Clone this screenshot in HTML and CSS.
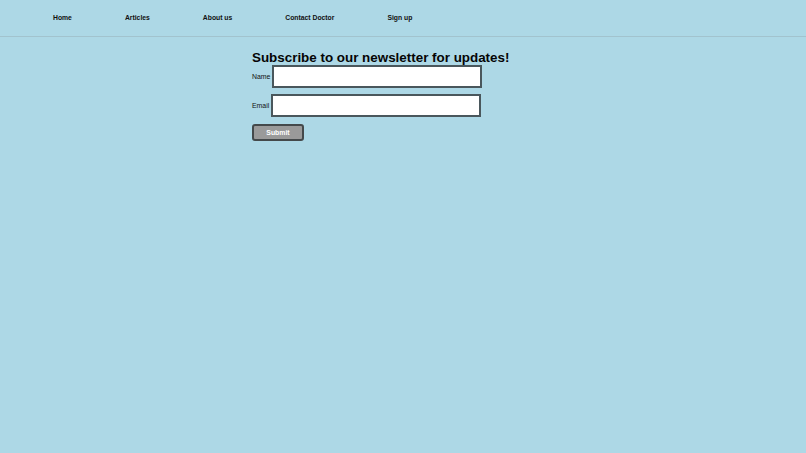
FILE: index.html
```html
<!DOCTYPE html>
<html lang="en">
<head>
<meta charset="utf-8">
<title>Newsletter</title>
<link rel="stylesheet" href="styles.css">
</head>
<body>
<nav class="nav">
  <a class="nav-link" href="#">Home</a>
  <a class="nav-link" href="#">Articles</a>
  <a class="nav-link" href="#">About us</a>
  <a class="nav-link" href="#">Contact Doctor</a>
  <a class="nav-link" href="#">Sign up</a>
</nav>
<main class="main">
  <h2 class="title">Subscribe to our newsletter for updates!</h2>
  <form class="form">
    <div class="row row-name">
      <label class="label" for="name">Name</label>
      <input class="field field-name" id="name" type="text">
    </div>
    <div class="row row-email">
      <label class="label" for="email">Email</label>
      <input class="field field-email" id="email" type="text">
    </div>
    <button class="submit" type="button">Submit</button>
  </form>
</main>
</body>
</html>
```

FILE: styles.css
```css
html, body {
  margin: 0;
  padding: 0;
  background: #add8e6;
  font-family: "Liberation Sans", Arial, Helvetica, sans-serif;
  color: #000;
}

.nav {
  display: flex;
  align-items: center;
  gap: 53px;
  height: 37px;
  padding-left: 53px;
  padding-bottom: 1px;
  border-bottom: 1px solid #a2c3ce;
  box-sizing: border-box;
}

.nav-link {
  font-size: 6.8px;
  font-weight: bold;
  color: #111;
  text-decoration: none;
}

.main {
  padding-left: 252px;
}

.title {
  margin: 14px 0 0;
  font-size: 13.4px;
  line-height: 14px;
  font-weight: bold;
  color: #050505;
}

.form {
  display: flex;
  flex-direction: column;
  align-items: flex-start;
}

.row {
  display: flex;
  align-items: center;
  gap: 2px;
}

.row-email {
  margin-top: 6px;
}

.label {
  font-size: 6.9px;
  color: #111;
}

.field {
  box-sizing: border-box;
  width: 210px;
  height: 23px;
  margin: 0;
  padding: 0;
  background: #fff;
  border: 2px solid #4a575c;
  border-radius: 0;
  outline: none;
}

.submit {
  box-sizing: border-box;
  margin-top: 7px;
  width: 52px;
  height: 17px;
  padding: 0;
  background: #9a9a9a;
  color: #fff;
  border: 2px solid #44494b;
  border-radius: 3px;
  font-family: "Liberation Sans", Arial, Helvetica, sans-serif;
  font-size: 6.9px;
  font-weight: bold;
}
```
